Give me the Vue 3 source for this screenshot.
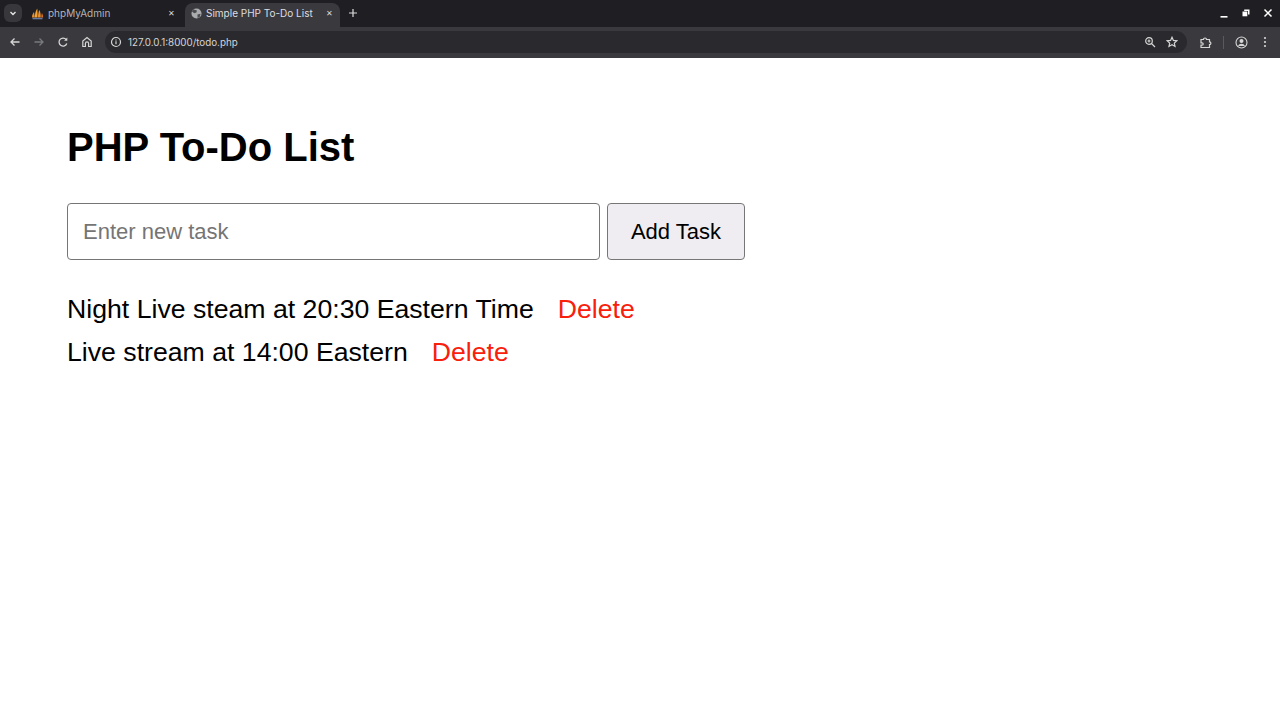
<script setup>
const tasks = ['Night Live steam at 20:30 Eastern Time', 'Live stream at 14:00 Eastern']
</script>

<template>
  <div class="window">
    <div class="tabbar">
      <div class="tabsearch">
        <svg width="10" height="10" viewBox="0 0 10 10"><path d="M2.5 4l2.5 2.5L7.5 4" fill="none" stroke="#e6e6e6" stroke-width="1.4"/></svg>
      </div>
      <div class="tab">
        <svg class="favicon" width="13" height="13" viewBox="0 0 13 13">
          <path d="M1 10.500C1 8 1.800 6.500 3 5l.8 5.500z" fill="#e8912d"/>
          <path d="M3.800 10.500C3.800 6.500 4.800 3.500 6.300 1.500c.3 3 .4 6 .2 9z" fill="#f3a533"/>
          <path d="M7 10.500c0-3 .3-5.500 1.500-7.500 1 2.300 1.300 5 1.200 7.500z" fill="#ee8f2a"/>
          <path d="M10.200 10.500c0-1.800.2-3 .8-4.500.8 1.400 1.200 3 1.200 4.500z" fill="#d9702a"/>
          <rect x="1.500" y="10.800" width="10" height="1.500" fill="#66799f"/>
        </svg>
        <span class="tabtitle">phpMyAdmin</span>
        <span class="close">✕</span>
      </div>
      <div class="tab active">
        <svg class="favicon" width="11" height="11" viewBox="0 0 12 12">
          <circle cx="6" cy="6" r="5.500" fill="#a9abae"/>
          <path d="M3 1.500l3.500 1.200-.6 2.300-2.400.6-2.500-1.800zM7 7l3.500-.6-1 3.300-2.300 1.300z" fill="#4a4c50"/>
        </svg>
        <span class="tabtitle">Simple PHP To-Do List</span>
        <span class="close">✕</span>
      </div>
      <svg class="newtab" width="10" height="10" viewBox="0 0 10 10"><path d="M5 1v8M1 5h8" stroke="#dcdcdc" stroke-width="1.2"/></svg>
      <div class="spacer"></div>
      <div class="winctl">
        <svg width="10" height="10" viewBox="0 0 10 10"><path d="M1.500 8.800h7" stroke="#fff" stroke-width="1.600"/></svg>
        <svg width="10" height="10" viewBox="0 0 10 10"><path d="M3.200 1.500h5.300v5h-1.500v-3.500h-3.800z" fill="#fff"/><rect x="1.500" y="3.500" width="4.800" height="4.800" fill="#fff"/></svg>
        <svg width="10" height="10" viewBox="0 0 10 10"><path d="M1.500 1.500l7 7M8.500 1.500l-7 7" stroke="#fff" stroke-width="1.500"/></svg>
      </div>
    </div>
    <div class="toolbar">
      <svg class="tool" width="12" height="12" viewBox="0 0 12 12"><path d="M10.500 6H2M5.500 2.500L2 6l3.500 3.500" fill="none" stroke="#d6d6d6" stroke-width="1.300"/></svg>
      <svg class="tool" width="12" height="12" viewBox="0 0 12 12"><path d="M1.500 6H10M6.500 2.500L10 6 6.500 9.500" fill="none" stroke="#77797c" stroke-width="1.300"/></svg>
      <svg class="tool" width="12" height="12" viewBox="0 0 12 12"><path d="M9.800 7.500A4 4 0 1 1 9.200 3.600" fill="none" stroke="#d6d6d6" stroke-width="1.300"/><path d="M10.300 1.500v3.200H7.100z" fill="#d6d6d6"/></svg>
      <svg class="tool" width="12" height="12" viewBox="0 0 12 12"><path d="M1.800 10.500V5L6 1.600 10.200 5v5.500H7.600V7.500a1.600 1.600 0 0 0-3.200 0v3z" fill="none" stroke="#d6d6d6" stroke-width="1.200"/></svg>
      <div class="omnibox">
        <svg width="12" height="12" viewBox="0 0 12 12"><circle cx="6" cy="6" r="4.500" fill="none" stroke="#d6d6d6" stroke-width="1.200"/><path d="M6 5.300v3M6 3.400v1" stroke="#d6d6d6" stroke-width="1.200"/></svg>
        <span class="url">127.0.0.1:8000/todo.php</span>
        <div class="spacer"></div>
        <svg width="12" height="12" viewBox="0 0 12 12"><circle cx="5" cy="5" r="3.300" fill="none" stroke="#d6d6d6" stroke-width="1.200"/><path d="M7.500 7.500L11 11M3.500 5h3M5 3.500v3" stroke="#d6d6d6" stroke-width="1.200"/></svg>
        <svg width="12" height="12" viewBox="0 0 12 12"><path d="M6 1.300l1.400 3.100 3.400.4-2.500 2.300.7 3.300L6 8.700l-3 1.700.7-3.300L1.200 4.800l3.400-.4z" fill="none" stroke="#d6d6d6" stroke-width="1.200"/></svg>
      </div>
      <svg class="ext" width="13" height="13" viewBox="0 0 13 13"><path d="M2 3.500h2.500a1.500 1.500 0 0 1 3 0H10.500v2.300a1.400 1.400 0 0 1 0 2.800v2.900H2V9.200h1a1.200 1.200 0 0 0 0-2.400H2z" fill="none" stroke="#d6d6d6" stroke-width="1.200"/></svg>
      <div class="divider"></div>
      <svg class="profile" width="13" height="13" viewBox="0 0 13 13"><circle cx="6.500" cy="6.500" r="5.500" fill="none" stroke="#d6d6d6" stroke-width="1.100"/><circle cx="6.500" cy="5" r="2" fill="#d6d6d6"/><path d="M3 10a3.800 3.800 0 0 1 7 0z" fill="#d6d6d6"/></svg>
      <svg class="menu" width="4" height="12" viewBox="0 0 4 12"><circle cx="2" cy="2" r="1.100" fill="#d6d6d6"/><circle cx="2" cy="6" r="1.100" fill="#d6d6d6"/><circle cx="2" cy="10" r="1.100" fill="#d6d6d6"/></svg>
    </div>
    <main class="page">
      <h1>PHP To-Do List</h1>
      <form class="addform" @submit.prevent>
        <input class="field" type="text" placeholder="Enter new task" />
        <button class="addbtn" type="submit">Add Task</button>
      </form>
      <ul class="tasks">
        <li v-for="task in tasks" :key="task">
          <span>{{ task }}</span>
          <a class="del" href="#">Delete</a>
        </li>
      </ul>
    </main>
  </div>
</template>

<style>
html, body { margin: 0; background: #fff; }
</style>

<style scoped>
.window { width: 1280px; height: 720px; display: flex; flex-direction: column; overflow: hidden; background: #fff; }
.tabbar { height: 27px; background: #1f1e22; display: flex; align-items: center; padding: 0 0 1px 4px; box-sizing: border-box; flex: none; font-family: Inter, "Liberation Sans", sans-serif; }
.tabsearch { width: 18px; height: 18px; border-radius: 6px; background: #38383c; display: flex; align-items: center; justify-content: center; margin-right: 5px; flex: none; }
.tab { width: 158px; height: 26px; display: flex; align-items: center; padding: 0 10px 0 4px; box-sizing: border-box; color: #b4b4b7; font-size: 10px; flex: none; }
.tab .favicon { margin-right: 4px; flex: none; }
.tab.active { background: #3a3a3e; color: #dedee0; border-radius: 8px 8px 0 0; height: 24px; align-self: flex-end; margin-bottom: -1px; width: 155px; padding: 0 7px 4px 6px; }
.tabtitle { flex: 1; white-space: nowrap; overflow: hidden; }
.close { font-size: 8px; color: #d8d8d8; }
.newtab { margin-left: 8px; }
.spacer { flex: 1; }
.winctl { display: flex; gap: 12px; padding-right: 7px; align-items: center; }
.toolbar { height: 31px; background: #3a3a3e; display: flex; align-items: center; padding: 0 0 1px 9px; box-sizing: border-box; flex: none; font-family: Inter, "Liberation Sans", sans-serif; }
.tool { margin-right: 12px; flex: none; }
.omnibox { width: 1082px; height: 22px; background: #2a2a2e; border-radius: 11px; display: flex; align-items: center; padding: 0 9px 0 5px; box-sizing: border-box; gap: 10px; flex: none; }
.url { font-size: 9.800px; color: #d4d4d6; margin-left: -4px; }
.ext { margin-left: 12px; flex: none; }
.divider { width: 1px; height: 13px; background: #5a5a5e; margin-left: 11px; }
.profile { margin-left: 11px; flex: none; }
.menu { margin-left: 15px; flex: none; }
.page { flex: 1; padding: 67px 67px 0; font-family: "Liberation Sans", Arial, sans-serif; color: #000; }
h1 { margin: 0; font-size: 40px; line-height: 44px; font-weight: 700; }
.addform { display: flex; gap: 7px; margin-top: 34px; }
.field { width: 533px; height: 57px; box-sizing: border-box; border: 1px solid #767676; border-radius: 4px; padding: 0 15px; font: 22px "Liberation Sans", Arial, sans-serif; background: #fff; outline: none; }
.field::placeholder { color: #757575; opacity: 1; }
.addbtn { width: 138px; height: 57px; box-sizing: border-box; border: 1px solid #767676; border-radius: 4px; background: #efedf1; font: 22px "Liberation Sans", Arial, sans-serif; color: #000; padding: 0; }
.tasks { list-style: none; margin: 35px 0 0; padding: 0; display: flex; flex-direction: column; gap: 15px; font-size: 26.670px; line-height: 28px; }
.tasks li { display: flex; gap: 24px; }
.del { color: #f8200c; text-decoration: none; }
</style>
